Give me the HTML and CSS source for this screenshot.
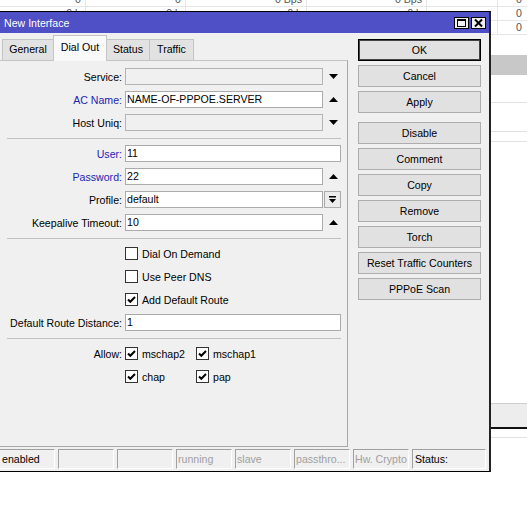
FILE: index.html
```html
<!DOCTYPE html>
<html>
<head>
<meta charset="utf-8">
<link rel="stylesheet" href="styles.css">
</head>
<body>
<div class="desk">
  <div class="bg">
    <div class="bgrow first">
      <span class="bc c1">0</span><span class="bc c2">0</span><span class="bc c3">0 Bps</span><span class="bc c4">0 Bps</span><span class="bc c5"></span><span class="bc c6">0</span>
    </div>
    <div class="bgrow">
      <span class="bc c1">0 b</span><span class="bc c2">0 b</span><span class="bc c3">0 b</span><span class="bc c4">0 b</span><span class="bc c5"></span><span class="bc c6">0</span>
    </div>
    <div class="bgrow">
      <span class="bc c1"></span><span class="bc c2"></span><span class="bc c3"></span><span class="bc c4"></span><span class="bc c5"></span><span class="bc c6">0</span>
    </div>
    <div class="bgspace s1"></div>
    <div class="bgband"></div>
    <div class="bgline l1"></div>
    <div class="bgline l2"></div>
    <div class="bgline l3"></div>
    <div class="bgline l4"></div>
    <div class="bgbar"></div>
    <div class="bgline l5"></div>
  </div>

  <div class="win">
    <div class="titlebar">
      <span class="title">New Interface</span>
      <span class="tbtn"><svg width="13" height="10" viewBox="0 0 13 10"><rect x="2.5" y="1.5" width="8" height="7" fill="none" stroke="#000" stroke-width="1"/><rect x="2" y="1" width="9" height="2" fill="#000"/></svg></span>
      <span class="tbtn"><svg width="13" height="10" viewBox="0 0 13 10"><path d="M3 1.5L10 8.5M10 1.5L3 8.5" stroke="#000" stroke-width="2"/></svg></span>
    </div>
    <div class="wbody">
      <div class="wmain">
        <div class="leftcol">
          <div class="tabs">
            <span class="tab t1">General</span>
            <span class="tab t2 active">Dial Out</span>
            <span class="tab t3">Status</span>
            <span class="tab t4">Traffic</span>
          </div>
          <div class="panel">
            <div class="row">
              <span class="lbl">Service:</span>
              <span class="inp dis"></span>
              <span class="arr"><svg width="9" height="5" viewBox="0 0 9 5"><path d="M0 0H9L4.5 5Z"/></svg></span>
            </div>
            <div class="row">
              <span class="lbl blue">AC Name:</span>
              <span class="inp">NAME-OF-PPPOE.SERVER</span>
              <span class="arr"><svg width="9" height="5" viewBox="0 0 9 5"><path d="M0 5H9L4.5 0Z"/></svg></span>
            </div>
            <div class="row">
              <span class="lbl">Host Uniq:</span>
              <span class="inp dis"></span>
              <span class="arr"><svg width="9" height="5" viewBox="0 0 9 5"><path d="M0 0H9L4.5 5Z"/></svg></span>
            </div>
            <div class="sep"></div>
            <div class="row">
              <span class="lbl blue">User:</span>
              <span class="inp">11</span>
            </div>
            <div class="row">
              <span class="lbl blue">Password:</span>
              <span class="inp">22</span>
              <span class="arr"><svg width="9" height="5" viewBox="0 0 9 5"><path d="M0 5H9L4.5 0Z"/></svg></span>
            </div>
            <div class="row">
              <span class="lbl">Profile:</span>
              <span class="inp">default</span>
              <span class="dd"><svg width="7" height="8" viewBox="0 0 7 8"><rect x="0" y="0" width="7" height="1.5"/><path d="M0 3H7L3.5 7Z"/></svg></span>
            </div>
            <div class="row">
              <span class="lbl">Keepalive Timeout:</span>
              <span class="inp">10</span>
              <span class="arr"><svg width="9" height="5" viewBox="0 0 9 5"><path d="M0 5H9L4.5 0Z"/></svg></span>
            </div>
            <div class="sep"></div>
            <div class="row">
              <span class="lbl"></span>
              <span class="cb"></span><span class="cbl">Dial On Demand</span>
            </div>
            <div class="row">
              <span class="lbl"></span>
              <span class="cb"></span><span class="cbl">Use Peer DNS</span>
            </div>
            <div class="row">
              <span class="lbl"></span>
              <span class="cb on"><svg width="11" height="11" viewBox="0 0 11 11"><path d="M2 5.5L4.3 7.8L9 3" fill="none" stroke="#000" stroke-width="2"/></svg></span><span class="cbl">Add Default Route</span>
            </div>
            <div class="row">
              <span class="lbl">Default Route Distance:</span>
              <span class="inp">1</span>
            </div>
            <div class="sep"></div>
            <div class="row">
              <span class="lbl">Allow:</span>
              <span class="cbgrp">
                <span class="cb on"><svg width="11" height="11" viewBox="0 0 11 11"><path d="M2 5.5L4.3 7.8L9 3" fill="none" stroke="#000" stroke-width="2"/></svg></span><span class="cbl">mschap2</span>
              </span>
              <span class="cb on"><svg width="11" height="11" viewBox="0 0 11 11"><path d="M2 5.5L4.3 7.8L9 3" fill="none" stroke="#000" stroke-width="2"/></svg></span><span class="cbl">mschap1</span>
            </div>
            <div class="row">
              <span class="lbl"></span>
              <span class="cbgrp">
                <span class="cb on"><svg width="11" height="11" viewBox="0 0 11 11"><path d="M2 5.5L4.3 7.8L9 3" fill="none" stroke="#000" stroke-width="2"/></svg></span><span class="cbl">chap</span>
              </span>
              <span class="cb on"><svg width="11" height="11" viewBox="0 0 11 11"><path d="M2 5.5L4.3 7.8L9 3" fill="none" stroke="#000" stroke-width="2"/></svg></span><span class="cbl">pap</span>
            </div>
          </div>
        </div>
        <div class="btns">
          <span class="btn default">OK</span>
          <span class="btn">Cancel</span>
          <span class="btn gapafter">Apply</span>
          <span class="btn">Disable</span>
          <span class="btn">Comment</span>
          <span class="btn">Copy</span>
          <span class="btn">Remove</span>
          <span class="btn">Torch</span>
          <span class="btn">Reset Traffic Counters</span>
          <span class="btn">PPPoE Scan</span>
        </div>
      </div>
      <div class="status">
        <span class="cell">enabled</span>
        <span class="cell"></span>
        <span class="cell"></span>
        <span class="cell grey">running</span>
        <span class="cell grey">slave</span>
        <span class="cell grey">passthro...</span>
        <span class="cell grey">Hw. Crypto</span>
        <span class="cell wide">Status:</span>
      </div>
    </div>
  </div>
</div>
</body>
</html>
```

FILE: styles.css
```css
* { box-sizing: border-box; margin: 0; padding: 0; }
html, body { width: 527px; height: 522px; overflow: hidden; background: #fff; }
body {
  font-family: "Liberation Sans", Arial, sans-serif;
  font-size: 10.6px;
  color: #000;
}
.desk { position: relative; width: 527px; height: 522px; overflow: hidden; }

/* background list behind the window */
.bg { display: flex; flex-direction: column; }
.bgrow {
  display: grid;
  grid-template-columns: 86px 100px 121px 120px 71px 29px;
  height: 14px;
  border-bottom: 1px solid #e6e6e6;
  line-height: 13px;
  color: #555;
}
.bgrow.first { margin-top: -7px; }
.bc { text-align: right; padding-right: 4px; border-right: 1px solid #e6e6e6; overflow: hidden; white-space: nowrap; }
.bc.c6 { border-right: none; padding-right: 5px; }
.bgspace.s1 { height: 20px; }
.bgband { height: 20px; background: #c8c8c8; }
.bgline { border-bottom: 1px solid #e2e2e2; }
.bgline.l1 { height: 28px; }
.bgline.l2 { height: 29px; }
.bgline.l3 { height: 10px; }
.bgline.l4 { height: 262px; border-bottom-color: #cfcfcf; }
.bgbar { height: 25px; background: #ededed; border-bottom: 2px solid #111; }
.bgline.l5 { height: 9px; }

/* window */
.win {
  position: absolute;
  left: -4px;
  top: 11px;
  width: 495px;
  height: 461px;
  background: #f0f0f0;
  border: 1px solid #000;
  border-right: 2px solid #222;
  display: flex;
  flex-direction: column;
}
.titlebar {
  height: 21px;
  background: #4f4fc6;
  display: flex;
  align-items: center;
  padding-left: 7px;
  padding-right: 3px;
  color: #fff;
}
.title { flex: 1; }
.tbtn {
  width: 15px;
  height: 12px;
  margin-left: 2px;
  background: #f0f0f0;
  border: 1px solid #000;
  display: flex;
  align-items: center;
  justify-content: center;
}
.tbtn svg { display: block; }

.wbody { padding: 2px 0 0 2px; display: flex; flex-direction: column; }
.wmain { display: flex; }
.leftcol { width: 349px; display: flex; flex-direction: column; }
.tabs { height: 25px; display: flex; align-items: flex-end; padding-left: 3px; position: relative; z-index: 1; }
.tab {
  height: 21px;
  border: 1px solid #c4c4c4;
  border-bottom: none;
  background: #e2e2e2;
  text-align: center;
  line-height: 19px;
  margin-right: -1px;
}
.tab.t1 { width: 52px; }
.tab.t2 { width: 54px; }
.tab.t3 { width: 44px; }
.tab.t4 { width: 45px; }
.tab.active {
  height: 26px;
  margin-bottom: -1px;
  background: #f9f9f9;
  line-height: 22px;
  position: relative;
  z-index: 2;
}
.panel {
  height: 387px;
  border: 1px solid #a8a8a8;
  border-top-color: #c4c4c4;
  padding: 7px 6px 0 0;
  display: flex;
  flex-direction: column;
}
.row { display: flex; height: 17px; margin-bottom: 6px; align-items: center; }
.lbl { width: 122px; margin-right: 3px; text-align: right; white-space: nowrap; flex: none; }
.lbl.blue { color: #2323b4; }
.inp {
  flex: 1;
  height: 17px;
  border: 1px solid #ababab;
  background: #fff;
  padding-left: 1px;
  line-height: 15px;
  white-space: nowrap;
}
.inp.dis { background: #f0f0f0; border-color: #b4b4b4; }
.arr { width: 18px; height: 17px; display: flex; align-items: center; justify-content: center; flex: none; padding-left: 2px; }
.arr svg, .dd svg { display: block; }
.dd {
  width: 17px;
  height: 17px;
  margin-left: 1px;
  border: 1px solid #acacac;
  background: #ececec;
  display: flex;
  align-items: center;
  justify-content: center;
  flex: none;
}
.sep { height: 1px; background: #c0c0c0; margin: 1px 0 6px 7px; }
.cb {
  width: 13px;
  height: 13px;
  border: 1px solid #333;
  background: #fff;
  flex: none;
  display: flex;
  align-items: center;
  justify-content: center;
}
.cb svg { display: block; }
.cbl { margin-left: 4px; white-space: nowrap; }
.cbgrp { width: 71px; display: flex; align-items: center; flex: none; }

.btns { width: 123px; margin-left: 10px; margin-top: 4px; display: flex; flex-direction: column; }
.btn {
  height: 22px;
  border: 1px solid #adadad;
  background: #e1e1e1;
  text-align: center;
  line-height: 20px;
  margin-bottom: 4px;
  white-space: nowrap;
}
.btn.default { border: 1px solid #000; box-shadow: inset 0 0 0 1px #444; }
.btn.gapafter { margin-bottom: 9px; }

.status { display: flex; margin-top: 2px; height: 20px; }
.cell {
  width: 56px;
  height: 20px;
  margin-right: 3px;
  border: 1px solid #a0a0a0;
  border-right-color: #fff;
  border-bottom-color: #fff;
  padding-left: 2px;
  line-height: 18px;
  white-space: nowrap;
  overflow: hidden;
}
.cell.grey { color: #a0a0a0; padding-left: 1px; }
.cell.wide { width: 74px; }
```
